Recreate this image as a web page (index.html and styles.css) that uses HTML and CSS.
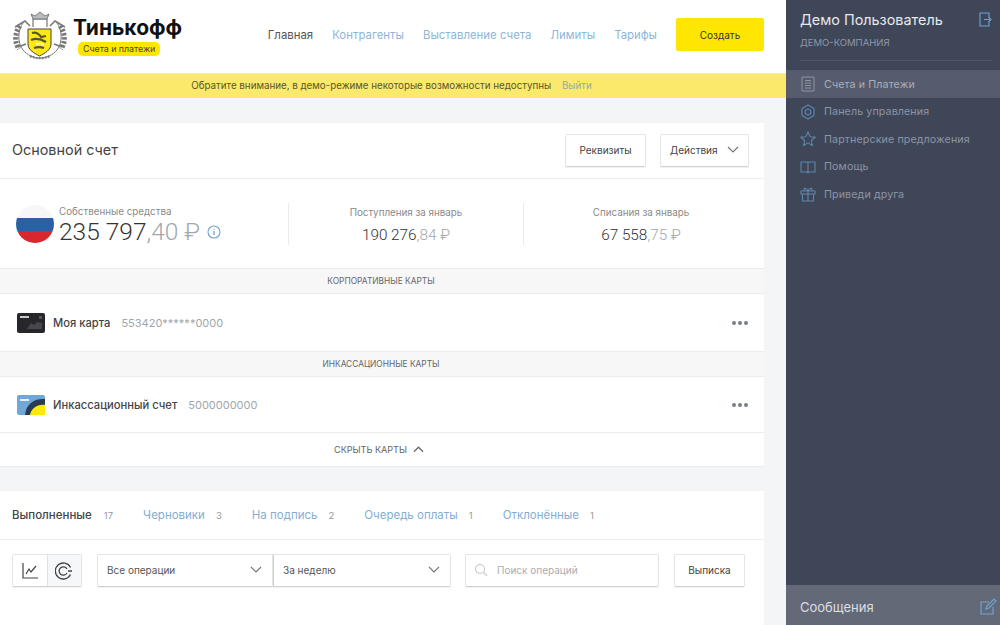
FILE: index.html
```html
<!DOCTYPE html>
<html lang="ru">
<head>
<meta charset="utf-8">
<title>Тинькофф — Счета и платежи</title>
<link rel="stylesheet" href="styles.css">
</head>
<body>
<div class="app">
  <main class="main">
    <header class="top">
      <div class="logo">
        <svg class="crest" viewBox="0 0 56 50" width="56" height="50">
          <g fill="none" stroke="#777">
            <path d="M8 16C3 22 2 32 7 39M48 16c5 6 6 16 1 23" stroke-width="5" stroke-dasharray="2.500 1.500"/>
            <path d="M11 13c-5 6-6 20 0 27 4 5 11 8 17 8s13-3 17-8c6-7 5-21 0-27" stroke-width="1"/>
            <path d="M3 17l10-6 5 5M53 17l-10-6-5 5M6 37l8-3M50 37l-8-3" stroke-width="1.500"/>
            <path d="M18 46c6 3 14 3 20 0" stroke-width="2" stroke-dasharray="2 1"/>
            <path d="M21 17V9h14v8" stroke-width="1.200"/>
          </g>
          <path d="M21 9l-2-5 4 2 5-4 5 4 4-2-2 5z" fill="#b9bcbe" stroke="#666" stroke-width=".8"/>
          <path d="M16 19h23v15c0 6-6 9-11.500 12C22 43 16 40 16 34z" fill="#fde910" stroke="#444" stroke-width="1"/>
          <path d="M20 23c4-1 7 1 9 4l5-1M19 30c5-2 10-1 15 2M22 38c3-1 7-1 10 0" fill="none" stroke="#55553a" stroke-width="2.200"/>
          <path d="M24 34c3-1 5-1 8 1" fill="none" stroke="#fffde0" stroke-width="1.500"/>
        </svg>
        <div class="brand">
          <div class="brand-name">Тинькофф</div>
          <div class="brand-tag">Счета и платежи</div>
        </div>
      </div>
      <nav class="nav">
        <a class="nav-link nav-current">Главная</a>
        <a class="nav-link">Контрагенты</a>
        <a class="nav-link">Выставление счета</a>
        <a class="nav-link">Лимиты</a>
        <a class="nav-link">Тарифы</a>
      </nav>
      <button class="create">Создать</button>
    </header>
    <div class="notice">Обратите внимание, в демо-режиме некоторые возможности недоступны <a class="notice-link">Выйти</a></div>

    <section class="card account">
      <div class="account-head">
        <h1 class="account-title">Основной счет</h1>
        <div class="head-actions">
          <button class="btn btn-req">Реквизиты</button>
          <button class="btn btn-act">Действия
            <svg class="chev" viewBox="0 0 12 7" width="12" height="7"><path d="M1 1l5 5 5-5" fill="none" stroke="#777" stroke-width="1.2"/></svg>
          </button>
        </div>
      </div>
      <div class="balance">
        <div class="bal-own">
          <svg class="flag" viewBox="0 0 38 38" width="38" height="38">
            <defs><clipPath id="fc"><circle cx="19" cy="19" r="19"/></clipPath></defs>
            <g clip-path="url(#fc)">
              <rect width="38" height="13" fill="#f7f7f7"/>
              <rect y="13" width="38" height="13" fill="#2b5fa8"/>
              <rect y="26" width="38" height="12" fill="#d9272e"/>
            </g>
          </svg>
          <div class="bal-text">
            <div class="bal-label">Собственные средства</div>
            <div class="bal-sum">235 797<span class="cents">,40 ₽</span>
              <svg class="info" viewBox="0 0 14 14" width="14" height="14"><circle cx="7" cy="7" r="6" fill="none" stroke="#6fa3cf" stroke-width="1.1"/><path d="M7 6v4M7 3.800v1" stroke="#6fa3cf" stroke-width="1.3"/></svg>
            </div>
          </div>
        </div>
        <div class="bal-col">
          <div class="bal-label">Поступления за январь</div>
          <div class="bal-mid">190 276<span class="cents">,84 ₽</span></div>
        </div>
        <div class="bal-col bal-col-last">
          <div class="bal-label">Списания за январь</div>
          <div class="bal-mid">67 558<span class="cents">,75 ₽</span></div>
        </div>
      </div>
      <div class="band">КОРПОРАТИВНЫЕ КАРТЫ</div>
      <div class="card-row">
        <svg class="mini" viewBox="0 0 28 20" width="28" height="20"><rect width="28" height="20" rx="2" fill="#26262b"/><rect x="3" y="3" width="9" height="2" fill="#c9c9c9"/><rect x="22" y="3" width="3" height="3" fill="#55555b"/><path d="M10 16l4-6 3 2 3-3 5 1v6z" fill="#47474d"/></svg>
        <span class="row-name">Моя карта</span>
        <span class="row-num">553420******0000</span>
        <span class="dots"><i></i><i></i><i></i></span>
      </div>
      <div class="band">ИНКАССАЦИОННЫЕ КАРТЫ</div>
      <div class="card-row card-row-b">
        <svg class="mini" viewBox="0 0 28 20" width="28" height="20"><rect width="28" height="20" rx="2" fill="#6fa8d6"/><path d="M8 20C9 9 17 3 28 4v16z" fill="#2a3c52"/><path d="M13 20c1-6 7-11 15-10v10z" fill="#fde910"/><rect x="3" y="4" width="9" height="2" fill="#e8f0f6"/></svg>
        <span class="row-name">Инкассационный счет</span>
        <span class="row-num">5000000000</span>
        <span class="dots"><i></i><i></i><i></i></span>
      </div>
      <div class="hide-row">СКРЫТЬ КАРТЫ
        <svg viewBox="0 0 12 7" width="11" height="7"><path d="M1 6l5-5 5 5" fill="none" stroke="#666" stroke-width="1.3"/></svg>
      </div>
    </section>

    <section class="card ops">
      <div class="tabs">
        <span class="tab tab-on">Выполненные<em>17</em></span>
        <span class="tab">Черновики<em>3</em></span>
        <span class="tab">На подпись<em>2</em></span>
        <span class="tab">Очередь оплаты<em>1</em></span>
        <span class="tab">Отклонённые<em>1</em></span>
      </div>
      <div class="filters">
        <div class="toggle">
          <span class="tg">
            <svg viewBox="0 0 18 18" width="18" height="18"><path d="M2 1v15h15M5 12l3-5 2 3 5-6" fill="none" stroke="#444" stroke-width="1.2"/></svg>
          </span>
          <span class="tg tg-2">
            <svg viewBox="0 0 18 18" width="18" height="18"><path d="M15.500 5.500A8 8 0 1 0 15.500 12.500M12 7A4.200 4.200 0 1 0 12 11M13 9h4" fill="none" stroke="#444" stroke-width="1.3"/></svg>
          </span>
        </div>
        <div class="selects">
          <div class="select sel-a">Все операции
            <svg class="chev" viewBox="0 0 12 7" width="12" height="7"><path d="M1 1l5 5 5-5" fill="none" stroke="#777" stroke-width="1.2"/></svg>
          </div>
          <div class="select sel-b">За неделю
            <svg class="chev" viewBox="0 0 12 7" width="12" height="7"><path d="M1 1l5 5 5-5" fill="none" stroke="#777" stroke-width="1.2"/></svg>
          </div>
        </div>
        <div class="search">
          <svg viewBox="0 0 14 14" width="14" height="14"><circle cx="6" cy="6" r="4.500" fill="none" stroke="#c5c9ce" stroke-width="1.1"/><path d="M9.500 9.500L13 13" stroke="#c5c9ce" stroke-width="1.1"/></svg>
          Поиск операций
        </div>
        <button class="btn btn-ext">Выписка</button>
      </div>
    </section>
  </main>

  <aside class="side">
    <div class="user">
      <div class="user-line">
        <span class="user-name">Демо Пользователь</span>
        <svg viewBox="0 0 14 15" width="14" height="15"><path d="M11 5V1H2v13h9v-4M6 7.500h7M10.500 5L13 7.500 10.500 10" fill="none" stroke="#6fa3cf" stroke-width="1.1"/></svg>
      </div>
      <div class="company">ДЕМО-КОМПАНИЯ</div>
    </div>
    <ul class="menu">
      <li class="menu-item menu-on">
        <svg viewBox="0 0 16 16" width="16" height="16"><path d="M2 1h12v14H2zM5 4.500h6M5 7h6M5 9.500h6M5 12h6" fill="none" stroke="#8b93a3" stroke-width="1"/></svg>Счета и Платежи</li>
      <li class="menu-item">
        <svg viewBox="0 0 16 16" width="16" height="16"><path d="M8 1l6 3.500v7L8 15l-6-3.500v-7z" fill="none" stroke="#5f86ad" stroke-width="1.1" stroke-linejoin="round"/><circle cx="8" cy="8" r="2.800" fill="none" stroke="#5f86ad" stroke-width="1.1"/></svg>Панель управления</li>
      <li class="menu-item">
        <svg viewBox="0 0 16 16" width="16" height="16"><path d="M8 1l2.100 4.700 5 .5-3.800 3.300 1.100 5L8 11.900 3.600 14.500l1.100-5L.9 6.200l5-.5z" fill="none" stroke="#5f86ad" stroke-width="1.1"/></svg>Партнерские предложения</li>
      <li class="menu-item">
        <svg viewBox="0 0 16 16" width="16" height="16"><path d="M1 3h6l1 1 1-1h6v10H9l-1 1-1-1H1zM8 4v10" fill="none" stroke="#5f86ad" stroke-width="1.1"/></svg>Помощь</li>
      <li class="menu-item">
        <svg viewBox="0 0 16 16" width="16" height="16"><path d="M1 5h14v3H1zM2.500 8v7h11V8M8 5v10M8 5C6 1 3 2 4.500 5M8 5c2-4 5-3 3.500 0" fill="none" stroke="#5f86ad" stroke-width="1.1"/></svg>Приведи друга</li>
    </ul>
    <div class="messages">
      <span>Сообщения</span>
      <svg viewBox="0 0 18 18" width="18" height="18"><path d="M14 9v7H2V4h8" fill="none" stroke="#6fa3cf" stroke-width="1.2"/><path d="M7 11l1-3 7-7 2 2-7 7z" fill="none" stroke="#6fa3cf" stroke-width="1.2"/></svg>
    </div>
  </aside>
</div>
</body>
</html>
```
FILE: styles.css
```css
* { box-sizing: border-box; }
html, body { margin: 0; height: 100%; }
body {
  font-family: Inter, "Liberation Sans", sans-serif;
  font-size: 11px;
  color: #3a3a3a;
  overflow: hidden;
}
button { font-family: inherit; cursor: pointer; }
.app { display: flex; width: 1000px; height: 625px; overflow: hidden; }

.main { width: 786px; flex: none; background: #f3f5f6; }

.top {
  height: 74px;
  background: #fff;
  display: flex;
  align-items: center;
  padding: 0 22px 4px 12px;
  border-bottom: 1px solid #efe9c8;
}
.logo { display: flex; align-items: center; gap: 5px; }
.crest { display: block; }
.brand { padding-top: 2px; }
.brand-name { font-size: 21px; font-weight: 700; line-height: 24px; color: #111; }
.brand-tag {
  display: inline-block;
  background: #ffe600;
  border-radius: 5px;
  font-size: 8.800px;
  line-height: 14px;
  padding: 0 5px;
  margin: 2px 0 0 5px;
  color: #444;
}
.nav { display: flex; gap: 19px; margin-left: auto; margin-right: 19px; }
.nav-link { font-size: 11.400px; color: #8fb6d8; }
.nav-current { color: #555; }
.create {
  width: 88px;
  height: 33px;
  background: #ffe600;
  border: 0;
  border-radius: 2px;
  font-size: 10px;
  color: #333;
}

.notice {
  height: 24px;
  background: #fbe96c;
  text-align: center;
  font-size: 9.770px;
  line-height: 24px;
  color: #5a5530;
  padding-right: 3px;
}
.notice-link { color: #8fb0a0; margin-left: 8px; }

.card { width: 764px; background: #fff; }
.account { margin-top: 25px; height: 344px; border-bottom: 1px solid #eaecee; }
.account-head {
  height: 56px;
  display: flex;
  align-items: center;
  justify-content: space-between;
  padding: 0 15px 0 12px;
  border-bottom: 1px solid #eeeff1;
}
.account-title { margin: 0 0 2px; font-size: 14.400px; font-weight: 400; color: #444; }
.head-actions { display: flex; gap: 14px; }
.btn {
  height: 33px;
  background: #fff;
  border: 1px solid #e2e4e6;
  border-bottom-color: #cfd2d5;
  border-radius: 2px;
  font-size: 10px;
  color: #444;
  box-shadow: 0 1px 1px rgba(0, 0, 0, .06);
  padding-bottom: 2px;
}
.btn-req { width: 81px; }
.btn-act {
  width: 89px;
  display: flex;
  align-items: center;
  justify-content: space-between;
  padding: 0 9px 2px;
}

.balance {
  height: 89px;
  display: flex;
  align-items: center;
}
.bal-own {
  width: 289px;
  height: 42px;
  display: flex;
  align-items: center;
  gap: 5px;
  padding-left: 16px;
  border-right: 1px solid #e9ebed;
}
.flag { display: block; }
.bal-text { margin-top: 4px; }
.bal-label { font-size: 9.800px; color: #8a8a8a; line-height: 12px; }
.bal-sum {
  font-family: Roboto, Inter, sans-serif;
  font-size: 24.500px;
  line-height: 28px;
  font-weight: 300;
  color: #333;
  display: flex;
  align-items: center;
  white-space: pre;
}
.cents { color: #a2a8ae; }
.info { margin-left: 7px; }
.bal-col {
  width: 235px;
  height: 42px;
  padding-top: 4px;
  text-align: center;
  border-right: 1px solid #e9ebed;
}
.bal-col-last { width: 234px; border-right: 0; }
.bal-mid { font-family: Roboto, Inter, sans-serif; font-size: 15.300px; line-height: 26px; padding-top: 3px; font-weight: 300; color: #333; }

.band {
  height: 26px;
  background: #f7f7f8;
  border-top: 1px solid #e9ebed;
  border-bottom: 1px solid #e9ebed;
  text-align: center;
  font-size: 8.400px;
  line-height: 24px;
  color: #666;
  padding-right: 2px;
}
.card-row {
  height: 57px;
  display: flex;
  align-items: center;
  padding: 0 16px 0 17px;
}
.card-row-b { height: 55px; }
.mini { display: block; margin-right: 8px; }
.row-name { font-size: 11.200px; font-weight: 500; color: #444; }
.row-num { font-size: 11px; color: #a0a6ac; margin-left: 11px; }
.dots { margin-left: auto; display: flex; gap: 2px; }
.dots i { width: 4px; height: 4px; border-radius: 50%; background: #777f8a; }
.hide-row {
  height: 34px;
  border-top: 1px solid #e9ebed;
  display: flex;
  align-items: center;
  justify-content: center;
  gap: 6px;
  font-size: 9.100px;
  color: #666;
  padding-right: 6px;
}

.ops { margin-top: 24px; height: 134px; }
.tabs {
  height: 49px;
  display: flex;
  align-items: center;
  gap: 30px;
  padding-left: 12px;
  border-bottom: 1px solid #eeeff1;
}
.tab { font-size: 11.500px; color: #85aed2; }
.tab em { font-style: normal; font-size: 9.500px; color: #999; margin-left: 11px; }
.tab-on { color: #444; font-weight: 500; }
.tab-on em { font-weight: 400; margin-left: 12px; }

.filters {
  display: flex;
  align-items: center;
  padding: 14px 0 0 12px;
}
.toggle {
  display: flex;
  width: 70px;
  height: 33px;
  border: 1px solid #e2e4e6;
  border-bottom-color: #cfd2d5;
  border-radius: 2px;
  box-shadow: 0 1px 1px rgba(0, 0, 0, .06);
}
.tg { flex: 1; display: flex; align-items: center; justify-content: center; }
.tg-2 { background: #f6f7f8; border-left: 1px solid #dfe1e3; }
.selects { display: flex; margin-left: 15px; }
.select {
  height: 33px;
  border: 1px solid #e2e4e6;
  border-bottom-color: #cfd2d5;
  display: flex;
  align-items: center;
  justify-content: space-between;
  font-size: 10px;
  color: #555;
  padding: 0 10px 2px 9px;
  box-shadow: 0 1px 1px rgba(0, 0, 0, .06);
}
.sel-a { width: 176px; border-radius: 2px 0 0 2px; }
.sel-b { width: 178px; border-left: 1px solid #cfd2d5; border-radius: 0 2px 2px 0; }
.search {
  width: 194px;
  height: 33px;
  margin-left: 14px;
  border: 1px solid #e2e4e6;
  border-bottom-color: #cfd2d5;
  border-radius: 2px;
  display: flex;
  align-items: center;
  gap: 9px;
  padding: 0 0 2px 8px;
  font-size: 10px;
  color: #a9adb2;
  box-shadow: 0 1px 1px rgba(0, 0, 0, .06);
}
.btn-ext { width: 71px; margin-left: 15px; }

.side {
  width: 214px;
  flex: none;
  background: #3e4658;
  display: flex;
  flex-direction: column;
  color: #dfe3e8;
}
.user { height: 61px; margin: 0 8px 0 14px; padding-top: 11px; border-bottom: 1px solid #4e5567; }
.user-line { display: flex; justify-content: space-between; align-items: center; }
.user-name { font-size: 14.400px; color: #e6e8ec; line-height: 17px; }
.company { font-size: 9.500px; color: #9098a8; margin-top: 9px; }
.menu { list-style: none; margin: 9px 0 0; padding: 0; }
.menu-item {
  height: 27.500px;
  display: flex;
  align-items: center;
  gap: 8px;
  padding: 1px 0 0 14px;
  font-size: 10.700px;
  color: #8c94a6;
  letter-spacing: .1px;
}
.menu-on { background: #565c6d; color: #a9aeba; }
.messages {
  margin-top: auto;
  height: 40px;
  background: #646978;
  display: flex;
  align-items: center;
  justify-content: space-between;
  padding: 4px 3px 0 14px;
  font-size: 13px;
  color: #dcdfe4;
}
```
